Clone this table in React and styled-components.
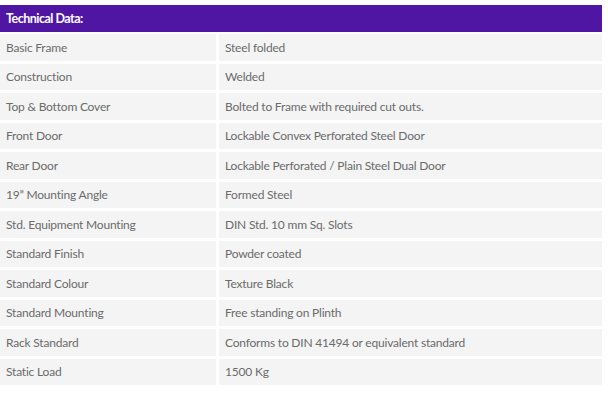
import { Fragment } from "react";
import styled, { createGlobalStyle } from "styled-components";

const GlobalStyle = createGlobalStyle`
  body {
    margin: 0;
    background: #fff;
    font-family: Lato, "Open Sans", sans-serif;
  }
`;

const Wrapper = styled.div`
  width: 602px;
  padding-top: 5px;
`;

const Table = styled.div`
  display: grid;
  grid-template-columns: 216px 1fr;
  column-gap: 3px;
  row-gap: 3px;
`;

const Header = styled.div`
  grid-column: 1 / 3;
  height: 27px;
  display: flex;
  align-items: center;
  padding-left: 6px;
  background: #4f16a4;
  color: #fff;
  font-weight: 700;
  font-size: 12.5px;
  letter-spacing: -0.5px;
  margin-bottom: -1px;
`;

const Cell = styled.div`
  height: 26.5px;
  display: flex;
  align-items: center;
  padding-left: 6px;
  background: #f4f4f4;
  color: #6b6b6b;
  font-size: 12px;
  letter-spacing: -0.2px;
  white-space: nowrap;
`;

const rows = [
  ["Basic Frame", "Steel folded"],
  ["Construction", "Welded"],
  ["Top & Bottom Cover", "Bolted to Frame with required cut outs."],
  ["Front Door", "Lockable Convex Perforated Steel Door"],
  ["Rear Door", "Lockable Perforated / Plain Steel Dual Door"],
  ["19” Mounting Angle", "Formed Steel"],
  ["Std. Equipment Mounting", "DIN Std. 10 mm Sq. Slots"],
  ["Standard Finish", "Powder coated"],
  ["Standard Colour", "Texture Black"],
  ["Standard Mounting", "Free standing on Plinth"],
  ["Rack Standard", "Conforms to DIN 41494 or equivalent standard"],
  ["Static Load", "1500 Kg"],
];

function App() {
  return (
    <>
      <GlobalStyle />
      <Wrapper>
        <Table>
          <Header>Technical Data:</Header>
          {rows.map(([label, value]) => (
            <Fragment key={label}>
              <Cell>{label}</Cell>
              <Cell>{value}</Cell>
            </Fragment>
          ))}
        </Table>
      </Wrapper>
    </>
  );
}

export default App;
